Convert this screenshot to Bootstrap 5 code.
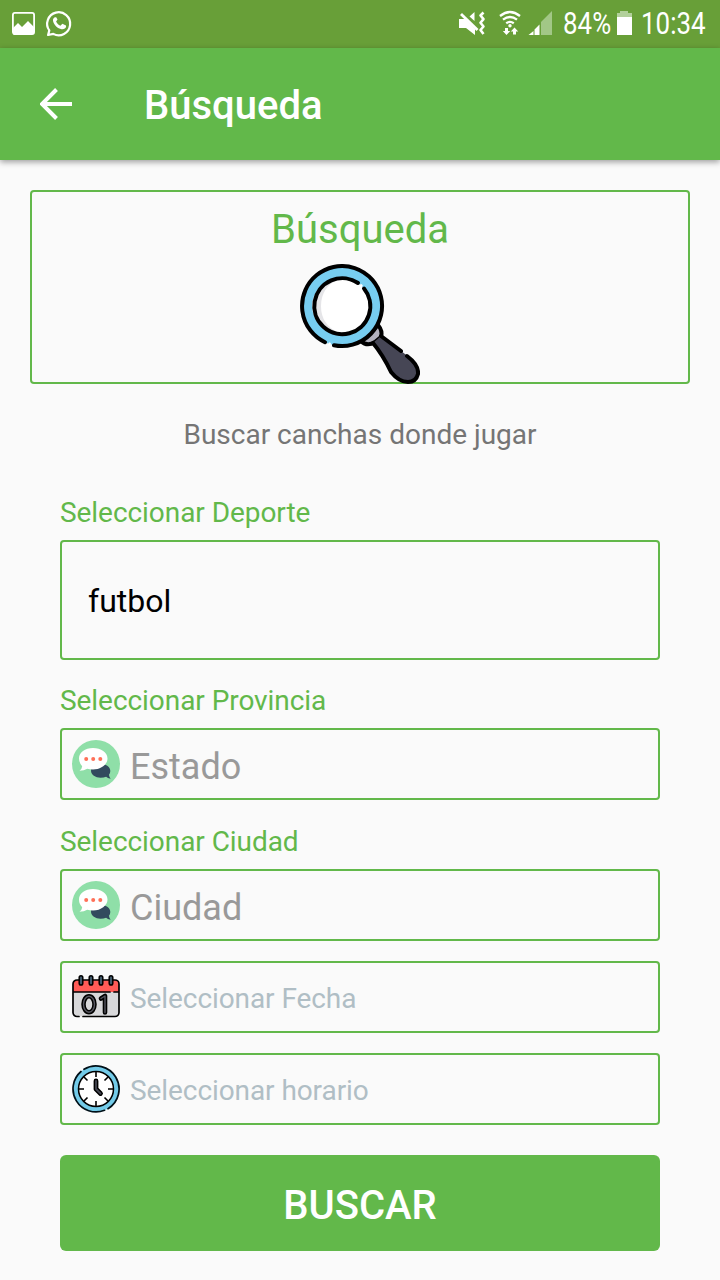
<!DOCTYPE html>
<html lang="es">
<head>
<meta charset="utf-8">
<meta name="viewport" content="width=device-width, initial-scale=1">
<title>Búsqueda</title>
<link href="https://cdn.jsdelivr.net/npm/bootstrap@5.3.0/dist/css/bootstrap.min.css" rel="stylesheet">
<style>
:root{--brand:#62b84a}
body{font-family:Roboto,"Noto Sans",sans-serif;background:#fafafa;height:1280px;overflow:hidden}
svg{display:block;flex:none}
.status-bar{height:48px;background:#689f38;color:#fff;font-size:30.5px;line-height:48px;padding:0 13px 0 11px}
.squeeze{display:inline-block;transform:scaleX(.85);transform-origin:left center;white-space:nowrap}
.percent{width:56px;padding-left:3px}
.clock{width:66px}
.app-bar{height:112px;background:var(--brand);box-shadow:0 2px 6px rgba(0,0,0,.38);padding-left:40px}
.app-title{font-size:40px;font-weight:500;line-height:48px;margin:4px 0 0 72px}
.hero-box{height:194px;margin:30px 30px 0;padding-top:14px}
.outlined{border:2px solid var(--brand);border-radius:4px}
.hero-title{font-size:40px;line-height:48px;color:var(--brand)}
.hero-icon{margin-top:10px}
.intro{font-size:28px;line-height:34px;color:#757575;margin-top:34px}
.search-form{margin:0 60px}
.field-label{display:block;font-size:28px;line-height:34px;letter-spacing:-.06px;color:var(--brand)}
.sport{height:120px;font-size:32px;padding:2px 0 0 26px;color:#000}
.field{height:72px;padding-left:10px;gap:10px}
.field.big{font-size:36px;color:#999}
.field.big span{padding-top:6px}
.field.hint{font-size:28px;letter-spacing:-.08px;color:#b0bec5}
.search-btn,.search-btn:hover{height:96px;margin-top:30px;background:var(--brand);border:0;color:#fff;font-size:40px;font-weight:500;border-radius:6px;padding:6px 0 0}
</style>
</head>
<body>
<header>
  <div class="status-bar d-flex align-items-center">
    <svg width="64" height="48" viewBox="0 0 64 48">
      <rect x="1.900" y="12.900" width="21.200" height="21.200" rx="2" fill="none" stroke="#fff" stroke-width="1.800"/>
      <path d="M2 28l5-5 4 4 6-6 6 6v7H2z" fill="#fff"/>
      <path d="M38.300 30.400a11.500 11.500 0 1 1 4 3.500l-5.200 1.100z" fill="none" stroke="#fff" stroke-width="2.200" stroke-linejoin="round"/>
      <path d="M44 17.200c-1.400.4-2.400 2-1.900 4 1 4 4.500 7.300 8.500 8 2.100.3 4.200-.8 4.500-2.500l-.1-1.200-3.600-1.800-2 2c-2-.8-3.500-2.300-4.300-4.200l1.400-1.900-1.300-2.400z" fill="#fff"/>
    </svg>
    <svg class="ms-auto" width="97" height="48" viewBox="456 0 97 48">
      <path d="M460 19h6l10 10v6l-9-7h-7zM475.500 12v9l-5-4.500z" fill="#fff"/>
      <path d="M462 14l16.500 16" stroke="#fff" stroke-width="2.800"/>
      <path d="M484.500 12.500l-3 3 3 3.600-3 3.700 3 3.700-3 3.500 3 4" fill="none" stroke="#fff" stroke-width="2.600" stroke-linejoin="round"/>
      <g fill="none" stroke="#fff" stroke-width="2.300"><path d="M501 16q10-8 20 0M504 19.700q7-5.500 14 0M507.200 23.200q3.800-2.700 7.600 0"/></g>
      <circle cx="511" cy="25.800" r="1.700" fill="#fff"/>
      <path d="M506 28h3v3h2.200l-3.700 4-3.700-4h2.200zM514 34.500h3V31.500h2.200l-3.700-4-3.700 4h2.200z" fill="#fff"/>
      <path d="M542 22l11-11v24h-11z" fill="#a2c786"/>
      <path d="M529.500 35l5-4v4zM535.500 29.500l5-5V35h-5z" fill="#fff"/>
    </svg>
    <div class="ms-2 percent"><span class="squeeze">84%</span></div>
    <svg class="me-2" width="17" height="48" viewBox="0 0 17 48"><path d="M4 11h8v2h4v5H1v-5h3z" fill="#b2d09b"/><path d="M1 17h15v18H1z" fill="#fff"/></svg>
    <div class="clock"><span class="squeeze">10:34</span></div>
  </div>
  <div class="app-bar d-flex align-items-center text-white">
    <svg width="32" height="32" viewBox="0 0 32 32"><path d="M32 16H3M16.500 1.500L2 16l14.500 14.500" fill="none" stroke="#fff" stroke-width="4"/></svg>
    <h1 class="app-title">Búsqueda</h1>
  </div>
</header>
<main>
  <section class="hero-box outlined d-flex flex-column align-items-center">
    <div class="hero-title">Búsqueda</div>
    <svg class="hero-icon" width="120" height="120" viewBox="0 0 120 120">
      <path d="M61 77l8-7 9-9q5 6 3 12l-6 5q-8 5-14-1z" fill="#b3b2be" stroke="#000" stroke-width="4"/>
      <path d="M81 72l24 18q14 10 13 20-2 8-10 8-9 0-17-10L73 79z" fill="#464655"/>
      <path d="M81 72l20 15M107 92q12 9 11 18-2 8-10 8-9 0-17-10-8-17-18-29" fill="none" stroke="#000" stroke-width="4" stroke-linecap="round" stroke-linejoin="round"/>
      <circle cx="42" cy="42" r="40" fill="#77cdf0"/>
      <circle cx="42" cy="42" r="28" fill="#fff"/>
      <path d="M39 15a27 27 0 0 0 0 54q-18-8-18-27t18-27z" fill="#e5e5e8"/>
      <path d="M25 78.200A40 40 0 1 1 34 81.200" fill="none" stroke="#000" stroke-width="4" stroke-linecap="round"/>
      <path d="M58 19A28 28 0 1 0 64 24.500" fill="none" stroke="#000" stroke-width="4" stroke-linecap="round"/>
      <path d="M60 21l2 1.500M28.500 79.700l2 .7" stroke="#fff" stroke-width="3"/>
    </svg>
  </section>
  <p class="intro text-center mb-0">Buscar canchas donde jugar</p>
  <form class="search-form">
    <span class="field-label" style="margin-top:44px">Seleccionar Deporte</span>
    <div class="sport outlined d-flex align-items-center" style="margin-top:10px">futbol</div>
    <span class="field-label" style="margin-top:24px">Seleccionar Provincia</span>
    <div class="field big outlined d-flex align-items-center" style="margin-top:10px">
      <svg width="48" height="48" viewBox="0 0 48 48"><use href="#chat"/></svg><span>Estado</span>
    </div>
    <span class="field-label" style="margin-top:25px">Seleccionar Ciudad</span>
    <div class="field big outlined d-flex align-items-center" style="margin-top:10px">
      <svg width="48" height="48" viewBox="0 0 48 48"><use href="#chat"/></svg><span>Ciudad</span>
    </div>
    <div class="field hint outlined d-flex align-items-center" style="margin-top:20px">
      <svg width="48" height="48" viewBox="0 -2 48 48">
        <rect x="1" y="5" width="46" height="36.500" rx="4" fill="#d8d8da"/>
        <path d="M1 17v-8a4 4 0 0 1 4-4h38a4 4 0 0 1 4 4v8z" fill="#ff5b57"/>
        <path d="M7 41.500H5a4 4 0 0 1-4-4V9a4 4 0 0 1 4-4h38a4 4 0 0 1 4 4v28.500a4 4 0 0 1-4 4H11M1 17h37M42 17h5" fill="none" stroke="#000" stroke-width="1.700" stroke-linecap="round"/>
        <g fill="#40596b" stroke="#000" stroke-width="1.500"><rect x="7.200" y=".7" width="3.600" height="9.300" rx="1.800"/><rect x="17.200" y=".7" width="3.600" height="9.300" rx="1.800"/><rect x="27.200" y=".7" width="3.600" height="9.300" rx="1.800"/><rect x="37.200" y=".7" width="3.600" height="9.300" rx="1.800"/></g>
        <g fill="none" stroke-linecap="round" stroke-linejoin="round"><ellipse cx="17" cy="29.300" rx="5.500" ry="8" stroke="#000" stroke-width="4.500"/><ellipse cx="17" cy="29.300" rx="5.500" ry="8" stroke="#565660" stroke-width="1.400"/><path d="M29 23.500l4-2.500v16.500" stroke="#000" stroke-width="4.600"/><path d="M29 23.500l4-2.500v16.500" stroke="#565660" stroke-width="1.400"/></g>
      </svg><span class="pt-1">Seleccionar Fecha</span>
    </div>
    <div class="field hint outlined d-flex align-items-center" style="margin-top:20px">
      <svg width="48" height="48" viewBox="0 0 48 48">
        <circle cx="24" cy="24" r="23" fill="#73cbe9"/><circle cx="24" cy="24" r="17.500" fill="#fff" stroke="#000" stroke-width="1.500"/>
        <path d="M12 4.300A23 23 0 0 1 36 43.700M32.500 45.300A23 23 0 0 1 9 6.500" fill="none" stroke="#001018" stroke-width="1.700" stroke-linecap="round"/>
        <path d="M24 7v5M24 36v5M7 24h5M36 24h5M12 12l3.500 3.500M36 12l-3.500 3.500M12 36l3.500-3.500M36 36l-3.500-3.500" stroke="#000" stroke-width="1.600"/>
        <path d="M24 16v8l4.500 4.500" fill="none" stroke="#000" stroke-width="4.800" stroke-linecap="round" stroke-linejoin="round"/><path d="M24 16v8l4.500 4.500" fill="none" stroke="#444651" stroke-width="1.800" stroke-linecap="round" stroke-linejoin="round"/>
      </svg><span class="pt-1">Seleccionar horario</span>
    </div>
    <button type="button" class="btn search-btn w-100">BUSCAR</button>
  </form>
</main>
<svg width="0" height="0" aria-hidden="true"><defs><g id="chat">
  <circle cx="24" cy="24" r="24" fill="#8fdfa8"/>
  <path d="M28.500 24c5 0 9.800 2.500 9.800 7q0 2.300-1.300 3.700.1 1.800 1.600 4-3-.4-4.500-1.900-2.300.9-5.600.9c-5 0-9.500-3-9.500-7s4.500-6.700 9.500-6.700z" fill="#324a5e"/>
  <path d="M21 8c8 0 14.500 4.500 14.500 10.500S29 29.500 21 29.500q-3.300 0-5.800-.8-3 2-7.700 2.100 2.400-1.800 2.700-4.600Q7 23 7 18.500C7 12.500 13 8 21 8z" fill="#fff"/>
  <g fill="#ff7058"><circle cx="14.200" cy="19" r="2"/><circle cx="21.200" cy="19" r="2"/><circle cx="28.300" cy="19" r="2"/></g>
</g></defs></svg>
<script src="https://cdn.jsdelivr.net/npm/bootstrap@5.3.0/dist/js/bootstrap.bundle.min.js"></script>
</body>
</html>
